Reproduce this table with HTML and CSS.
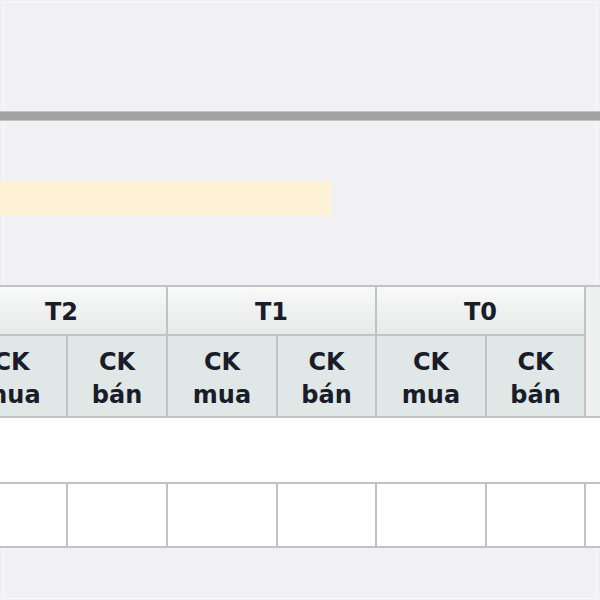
FILE: index.html
```html
<!DOCTYPE html>
<html lang="vi">
<head>
<meta charset="utf-8">
<title>Bảng giá</title>
<link rel="stylesheet" href="styles.css">
</head>
<body>
<div class="frame">
  <div class="divider"></div>
  <div class="notice"></div>
  <div class="table-wrap">
    <div class="grid">
      <div class="th group g1">T2</div>
      <div class="th group g2">T1</div>
      <div class="th group g3">T0</div>
      <div class="th extra"></div>
      <div class="th sub">CK<br>mua</div>
      <div class="th sub">CK<br>bán</div>
      <div class="th sub">CK<br>mua</div>
      <div class="th sub">CK<br>bán</div>
      <div class="th sub">CK<br>mua</div>
      <div class="th sub">CK<br>bán</div>
      <div class="band"></div>
      <div class="td"></div>
      <div class="td"></div>
      <div class="td"></div>
      <div class="td"></div>
      <div class="td"></div>
      <div class="td"></div>
      <div class="td"></div>
    </div>
  </div>
</div>
</body>
</html>
```
FILE: styles.css
```css
html, body {
  margin: 0;
  padding: 0;
}
body {
  background: #f1f1f3;
  font-family: "DejaVu Sans", "Verdana", sans-serif;
  overflow: hidden;
}
.frame {
  margin: 2px 0 0 3px;
  width: 592px;
  height: 595px;
  border: 1px solid #fbfbfc;
}
.divider {
  margin: 108px -4px 0 -4px;
  height: 8px;
  background: #a2a2a2;
  border-top: 1px solid #c2c2c2;
  border-bottom: 1px solid #c2c2c2;
}
.notice {
  margin: 60px 0 0 -4px;
  width: 331px;
  height: 35px;
  background: #fdf2d5;
}
.table-wrap {
  margin: 69px -4px 0 -4px;
  overflow: hidden;
}
.grid {
  margin-left: -43px;
  display: grid;
  grid-template-columns: 109px 98px 108px 97px 108px 97px 100px;
  grid-template-rows: 47px 80px 64px 62px;
  gap: 2px;
  padding: 2px 0;
  width: max-content;
  background: #bfc3c3;
}
.th {
  display: flex;
  align-items: center;
  justify-content: center;
  text-align: center;
  color: #1a1c2a;
  font-weight: bold;
  font-size: 24px;
  line-height: 33px;
}
.group {
  background: linear-gradient(#f8f9f8, #e6eae8);
  padding-top: 4px;
}
.g1 { grid-column: 1 / 3; }
.g2 { grid-column: 3 / 5; }
.g3 { grid-column: 5 / 7; }
.extra {
  grid-column: 7;
  grid-row: 1 / 3;
  background: #eef0ef;
}
.sub {
  background: #e0e7e7;
  padding-top: 5px;
}
.band {
  grid-column: 1 / -1;
  background: #fefefe;
}
.td {
  background: #ffffff;
}
```
